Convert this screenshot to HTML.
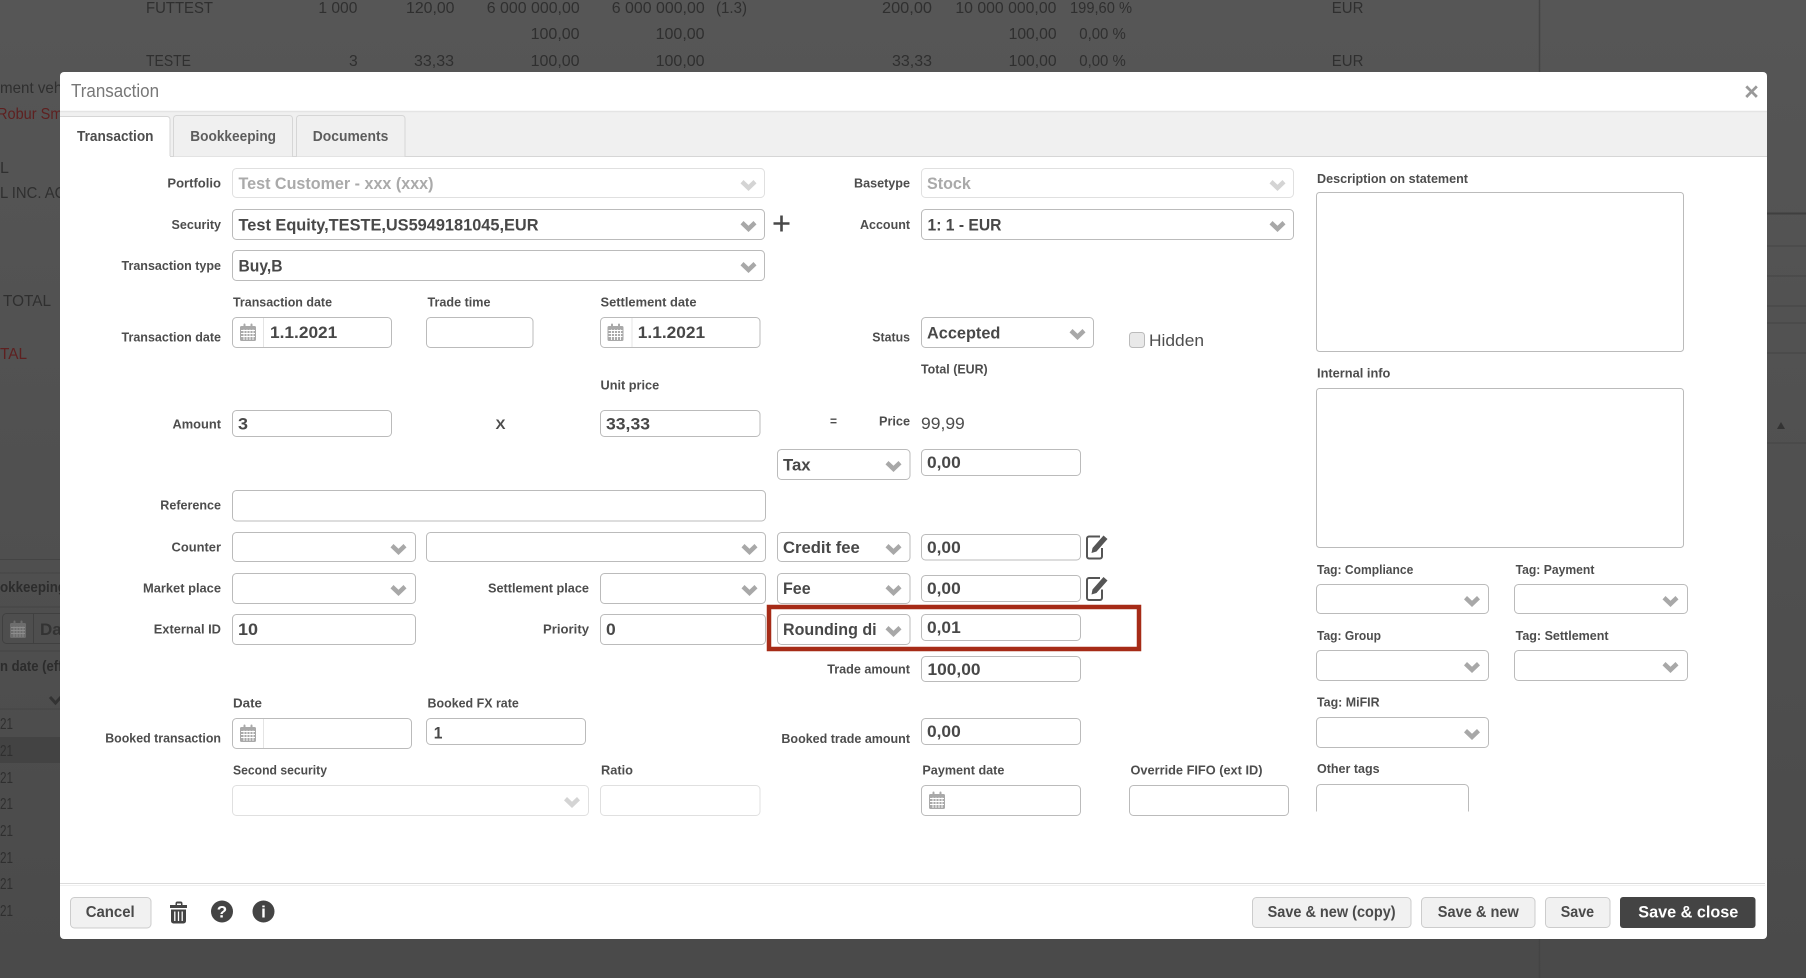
<!DOCTYPE html>
<html><head><meta charset="utf-8"><title>Transaction</title>
<style>
html,body{margin:0;padding:0;background:#4e4e4e;overflow:hidden}
svg{display:block;font-family:"Liberation Sans",sans-serif}
.b{fill:#2f2f2f;font-size:16px}
.r{fill:#5e2020;font-size:16px}
.bb{fill:#2c2c2c;font-size:14.500px;font-weight:bold}
.l{fill:#4d4d4d;font-size:13px;font-weight:bold}
.v{fill:#484848;font-size:17px;font-weight:bold}
.d{fill:#aaa;font-size:17px;font-weight:bold}
.n{fill:#4d4d4d;font-size:17px}
.t{fill:#4d4d4d;font-size:15px;font-weight:bold}
.tt{fill:#777;font-size:18px}
.btn{fill:#4a4a4a;font-size:16px;font-weight:bold}
.i{fill:#fff;stroke:#bbb;stroke-width:1}
.o{fill:#fff;stroke:#e0e0e0;stroke-width:1}
.bt{fill:#f1f1f1;stroke:#ccc;stroke-width:1}
</style></head><body>
<svg width="1806" height="978" viewBox="0 0 1806 978" xmlns="http://www.w3.org/2000/svg">
<defs>
<linearGradient id="bg" x1="0" y1="0" x2="0" y2="1"><stop offset="0" stop-color="#565656"/><stop offset="1" stop-color="#4a4a4a"/></linearGradient>
<symbol id="ch" width="16" height="11" viewBox="0 0 16 11"><path d="M0 3.400 3 0 8 4.800 13 0 16 3.400 8 11Z" fill="#a8a8a8"/></symbol>
<symbol id="chd" width="16" height="11" viewBox="0 0 16 11"><path d="M0 3.400 3 0 8 4.800 13 0 16 3.400 8 11Z" fill="#d4d4d4"/></symbol>
<symbol id="cal" width="16" height="18" viewBox="0 0 16 18"><path d="M1.500 3h2V1.500a1 1 0 0 1 2 0V3h5V1.500a1 1 0 0 1 2 0V3h2A1.500 1.500 0 0 1 16 4.500V16.500A1.500 1.500 0 0 1 14.500 18H1.500A1.500 1.500 0 0 1 0 16.500V4.500A1.500 1.500 0 0 1 1.500 3Z" fill="#a9a9a9"/><path d="M1 7.500H15M1 10.500H15M1 13.500H15M4 6.500V17M7 6.500V17M10 6.500V17M13 6.500V17" stroke="#fff" stroke-width=".9"/></symbol>
<symbol id="ed" width="22" height="26" viewBox="0 0 22 26"><path d="M14 2.500H3A2 2 0 0 0 1 4.500V22.500A2 2 0 0 0 3 24.500H14A2 2 0 0 0 16 22.500V14" fill="none" stroke="#555" stroke-width="2"/><path d="M5.500 19 6.500 14 17.500 1.500 21.500 5 10.500 17.500Z" fill="#555"/></symbol>
<clipPath id="rc"><rect x="780" y="610" width="97" height="40"/></clipPath>
<clipPath id="oc"><rect x="1310" y="780" width="170" height="31.500"/></clipPath>
</defs>

<!-- page behind the overlay -->
<rect width="1806" height="978" fill="url(#bg)"/>
<path d="M1539.500 0V978" stroke="#444" stroke-width="1.500"/>
<path d="M1767 213.500H1806" stroke="#3f3f3f" stroke-width="2"/>
<path d="M1767 246H1806M1767 276H1806M1767 306H1806M1767 323H1806M1767 353H1806M1767 443H1806" stroke="#444"/>
<path d="M1777 429h8l-4-7Z" fill="#333"/>
<path d="M0 559.500H60M0 573H60M0 607H60M0 651H60M0 709H60" stroke="#444"/>
<rect x="0" y="737" width="60" height="26" fill="#434343"/>

<text class="b" x="146" y="13" textLength="67" lengthAdjust="spacingAndGlyphs">FUTTEST</text>
<text class="b" x="318.400" y="13" textLength="39" lengthAdjust="spacingAndGlyphs">1 000</text>
<text class="b" x="406" y="13" textLength="48.500" lengthAdjust="spacingAndGlyphs">120,00</text>
<text class="b" x="486.700" y="13" textLength="93" lengthAdjust="spacingAndGlyphs">6 000 000,00</text>
<text class="b" x="611.700" y="13" textLength="93" lengthAdjust="spacingAndGlyphs">6 000 000,00</text>
<text class="b" x="716" y="13" textLength="31" lengthAdjust="spacingAndGlyphs">(1.3)</text>
<text class="b" x="882" y="13" textLength="50" lengthAdjust="spacingAndGlyphs">200,00</text>
<text class="b" x="955.400" y="13" textLength="101" lengthAdjust="spacingAndGlyphs">10 000 000,00</text>
<text class="b" x="1070" y="13" textLength="62" lengthAdjust="spacingAndGlyphs">199,60 %</text>
<text class="b" x="1331.800" y="13" textLength="31.600" lengthAdjust="spacingAndGlyphs">EUR</text>

<text class="b" x="530.600" y="39" textLength="49" lengthAdjust="spacingAndGlyphs">100,00</text>
<text class="b" x="655.600" y="39" textLength="49" lengthAdjust="spacingAndGlyphs">100,00</text>
<text class="b" x="1008.600" y="39" textLength="48" lengthAdjust="spacingAndGlyphs">100,00</text>
<text class="b" x="1079.300" y="39" textLength="46.500" lengthAdjust="spacingAndGlyphs">0,00 %</text>

<text class="b" x="146" y="66" textLength="45" lengthAdjust="spacingAndGlyphs">TESTE</text>
<text class="b" x="349" y="66" textLength="8.700" lengthAdjust="spacingAndGlyphs">3</text>
<text class="b" x="414" y="66" textLength="40" lengthAdjust="spacingAndGlyphs">33,33</text>
<text class="b" x="530.600" y="66" textLength="49" lengthAdjust="spacingAndGlyphs">100,00</text>
<text class="b" x="655.600" y="66" textLength="49" lengthAdjust="spacingAndGlyphs">100,00</text>
<text class="b" x="892" y="66" textLength="40" lengthAdjust="spacingAndGlyphs">33,33</text>
<text class="b" x="1008.600" y="66" textLength="48" lengthAdjust="spacingAndGlyphs">100,00</text>
<text class="b" x="1079.300" y="66" textLength="46.500" lengthAdjust="spacingAndGlyphs">0,00 %</text>
<text class="b" x="1331.800" y="66" textLength="31.600" lengthAdjust="spacingAndGlyphs">EUR</text>

<text class="b" x="0" y="93" textLength="85" lengthAdjust="spacingAndGlyphs">ment vehicle</text>
<text class="r" x="-3" y="119" textLength="80" lengthAdjust="spacingAndGlyphs">Robur Small</text>
<text class="b" x="0" y="173">L</text>
<text class="b" x="0" y="198" textLength="76" lengthAdjust="spacingAndGlyphs">L INC. ACC</text>
<text class="b" x="3" y="306" textLength="48" lengthAdjust="spacingAndGlyphs">TOTAL</text>
<text class="r" x="0" y="359" textLength="27" lengthAdjust="spacingAndGlyphs">TAL</text>
<text class="bb" x="0" y="592" textLength="66" lengthAdjust="spacingAndGlyphs">okkeeping</text>
<rect x="2.500" y="613.500" width="70" height="30" rx="4" fill="none" stroke="#404040"/>
<path d="M33.500 614V643" stroke="#404040"/>
<use href="#cal" x="10" y="620" opacity=".35"/>
<text x="40" y="635" font-size="17" font-weight="bold" fill="#333">Date</text>
<text class="bb" x="0" y="671" textLength="104" lengthAdjust="spacingAndGlyphs">n date (effective)</text>
<path d="M50 697 55.500 703 61 697" fill="none" stroke="#333" stroke-width="3"/>
<text class="b" x="0" y="729" textLength="13" lengthAdjust="spacingAndGlyphs">21</text>
<text class="b" x="0" y="756" textLength="13" lengthAdjust="spacingAndGlyphs">21</text>
<text class="b" x="0" y="783" textLength="13" lengthAdjust="spacingAndGlyphs">21</text>
<text class="b" x="0" y="809" textLength="13" lengthAdjust="spacingAndGlyphs">21</text>
<text class="b" x="0" y="836" textLength="13" lengthAdjust="spacingAndGlyphs">21</text>
<text class="b" x="0" y="863" textLength="13" lengthAdjust="spacingAndGlyphs">21</text>
<text class="b" x="0" y="889" textLength="13" lengthAdjust="spacingAndGlyphs">21</text>
<text class="b" x="0" y="916" textLength="13" lengthAdjust="spacingAndGlyphs">21</text>

<!-- modal -->
<rect x="60" y="72" width="1707" height="867" rx="4" fill="#fff"/>
<text class="tt" x="71" y="97" textLength="88" lengthAdjust="spacingAndGlyphs">Transaction</text>
<text x="1751.500" y="100" font-size="25" font-weight="bold" fill="#999" text-anchor="middle">×</text>
<rect x="60" y="112" width="1707" height="44" fill="#f0f0f0"/>
<path d="M60 111.500H1767" stroke="#e4e4e4" stroke-width="1.500"/>
<path d="M60 156.500H1767" stroke="#d6d6d6"/>
<path d="M173.500 156.500V118.500a3 3 0 0 1 3-3H289.500a3 3 0 0 1 3 3V156.500" fill="#f0f0f0" stroke="#d6d6d6"/>
<path d="M296.500 156.500V118.500a3 3 0 0 1 3-3H402a3 3 0 0 1 3 3V156.500" fill="#f0f0f0" stroke="#d6d6d6"/>
<path d="M60 157.500V116.500H167a3 3 0 0 1 3 3V157.500Z" fill="#fff"/>
<path d="M60 116.500H167a3 3 0 0 1 3 3V156" fill="none" stroke="#d6d6d6"/>
<text class="t" x="77" y="141" textLength="76.500" lengthAdjust="spacingAndGlyphs">Transaction</text>
<text class="t" x="190.300" y="141" textLength="85.700" lengthAdjust="spacingAndGlyphs" fill-opacity=".9">Bookkeeping</text>
<text class="t" x="312.800" y="141" textLength="75.500" lengthAdjust="spacingAndGlyphs" fill-opacity=".9">Documents</text>

<!-- controls -->
<rect class="o" x="232.500" y="168.500" width="532" height="29" rx="4"/>
<rect class="i" x="232.500" y="209.500" width="532" height="30" rx="4"/>
<rect class="i" x="232.500" y="250.500" width="532" height="30" rx="4"/>
<rect class="i" x="232.500" y="317.500" width="159" height="30" rx="4"/>
<rect class="i" x="426.500" y="317.500" width="106.500" height="30" rx="4"/>
<rect class="i" x="600.500" y="317.500" width="159.500" height="30" rx="4"/>
<rect class="i" x="232.500" y="410.500" width="159" height="26" rx="4"/>
<rect class="i" x="600.500" y="410.500" width="159.500" height="26" rx="4"/>
<rect class="i" x="232.500" y="490.500" width="533" height="30.500" rx="4"/>
<rect class="i" x="232.500" y="532.500" width="183" height="29" rx="4"/>
<rect class="i" x="426.500" y="532.500" width="339" height="29" rx="4"/>
<rect class="i" x="232.500" y="573.500" width="183" height="30" rx="4"/>
<rect class="i" x="600.500" y="573.500" width="165" height="30" rx="4"/>
<rect class="i" x="232.500" y="614.500" width="183" height="30" rx="4"/>
<rect class="i" x="600.500" y="614.500" width="165" height="30" rx="4"/>
<rect class="i" x="232.500" y="718.500" width="179" height="30" rx="4"/>
<rect class="i" x="426.500" y="718.500" width="159" height="26" rx="4"/>
<rect class="o" x="232.500" y="785.500" width="356" height="30" rx="4"/>
<rect class="o" x="600.500" y="785.500" width="159.500" height="30" rx="4"/>
<path d="M263.500 318V347M632 318V347M263.500 719V748M952.500 786V815" stroke="#e4e4e4"/>

<rect class="o" x="921.500" y="168.500" width="372" height="29" rx="4"/>
<rect class="i" x="921.500" y="209.500" width="372" height="30" rx="4"/>
<rect class="i" x="921.500" y="317.500" width="172" height="30" rx="4"/>
<rect x="1129.500" y="332.500" width="15" height="15" rx="3" fill="#e9e9e9" stroke="#bbb"/>
<rect class="i" x="777.500" y="449.500" width="132.500" height="30" rx="4"/>
<rect class="i" x="921.500" y="449.500" width="159" height="26" rx="4"/>
<rect class="i" x="777.500" y="532.500" width="132.500" height="29" rx="4"/>
<rect class="i" x="921.500" y="534.500" width="159" height="25.500" rx="4"/>
<rect class="i" x="777.500" y="573.500" width="132.500" height="30" rx="4"/>
<rect class="i" x="921.500" y="575.500" width="159" height="26" rx="4"/>
<rect class="i" x="777.500" y="614.500" width="132.500" height="30" rx="4"/>
<rect class="i" x="921.500" y="614.500" width="159" height="26" rx="4"/>
<rect class="i" x="921.500" y="656.500" width="159" height="25" rx="4"/>
<rect class="i" x="921.500" y="718.500" width="159" height="26" rx="4"/>
<rect class="i" x="921.500" y="785.500" width="159" height="30" rx="4"/>
<rect class="i" x="1129.500" y="785.500" width="159" height="30" rx="4"/>

<rect class="i" x="1316.500" y="192.500" width="367" height="159" rx="3"/>
<rect class="i" x="1316.500" y="388.500" width="367" height="159" rx="3"/>
<rect class="i" x="1316.500" y="584.500" width="172" height="29" rx="4"/>
<rect class="i" x="1514.500" y="584.500" width="173" height="29" rx="4"/>
<rect class="i" x="1316.500" y="650.500" width="172" height="30" rx="4"/>
<rect class="i" x="1514.500" y="650.500" width="173" height="30" rx="4"/>
<rect class="i" x="1316.500" y="717.500" width="172" height="30" rx="4"/>
<rect class="i" x="1316.500" y="784.500" width="152" height="40" rx="4" clip-path="url(#oc)"/>

<!-- red highlight -->
<rect x="769" y="607" width="370" height="42" fill="none" stroke="#a62b17" stroke-width="4.500"/>

<!-- chevrons -->
<use href="#chd" x="740.500" y="180"/>
<use href="#ch" x="740.500" y="221"/>
<use href="#ch" x="740.500" y="262"/>
<use href="#chd" x="1269.500" y="180"/>
<use href="#ch" x="1269.500" y="221"/>
<use href="#ch" x="1069.500" y="329"/>
<use href="#ch" x="390.500" y="544"/>
<use href="#ch" x="741.500" y="544"/>
<use href="#ch" x="390.500" y="585"/>
<use href="#ch" x="741.500" y="585"/>
<use href="#ch" x="885.500" y="461"/>
<use href="#ch" x="885.500" y="544"/>
<use href="#ch" x="885.500" y="585"/>
<use href="#ch" x="885.500" y="626"/>
<use href="#ch" x="1464" y="596"/>
<use href="#ch" x="1662.500" y="596"/>
<use href="#ch" x="1464" y="662"/>
<use href="#ch" x="1662.500" y="662"/>
<use href="#ch" x="1464" y="729"/>
<use href="#chd" x="564" y="797"/>

<!-- calendars -->
<use href="#cal" x="240" y="323"/>
<use href="#cal" x="607.500" y="323"/>
<use href="#cal" x="240" y="724"/>
<use href="#cal" x="929" y="791"/>

<!-- edit icons -->
<use href="#ed" x="1086" y="534"/>
<use href="#ed" x="1086" y="575.500"/>

<!-- plus -->
<path d="M781.500 215.500V231.500M773.500 223.500H789.500" stroke="#484848" stroke-width="2.600"/>

<!-- left labels -->
<text class="l" x="167.400" y="187.500" textLength="53.600" lengthAdjust="spacingAndGlyphs">Portfolio</text>
<text class="l" x="171.500" y="229" textLength="49.500" lengthAdjust="spacingAndGlyphs">Security</text>
<text class="l" x="121.500" y="270" textLength="99.500" lengthAdjust="spacingAndGlyphs">Transaction type</text>
<text class="l" x="121.500" y="341.500" textLength="99.500" lengthAdjust="spacingAndGlyphs">Transaction date</text>
<text class="l" x="172.500" y="428.500" textLength="48.500" lengthAdjust="spacingAndGlyphs">Amount</text>
<text class="l" x="160.300" y="509.500" textLength="60.700" lengthAdjust="spacingAndGlyphs">Reference</text>
<text class="l" x="171.500" y="551.500" textLength="49.500" lengthAdjust="spacingAndGlyphs">Counter</text>
<text class="l" x="143" y="592.500" textLength="78" lengthAdjust="spacingAndGlyphs">Market place</text>
<text class="l" x="488" y="592.500" textLength="101" lengthAdjust="spacingAndGlyphs">Settlement place</text>
<text class="l" x="153.700" y="633.500" textLength="67.300" lengthAdjust="spacingAndGlyphs">External ID</text>
<text class="l" x="543" y="633.500" textLength="46" lengthAdjust="spacingAndGlyphs">Priority</text>
<text class="l" x="105.200" y="742.500" textLength="115.800" lengthAdjust="spacingAndGlyphs">Booked transaction</text>

<text class="l" x="233" y="306.500" textLength="99" lengthAdjust="spacingAndGlyphs">Transaction date</text>
<text class="l" x="427.500" y="306.500" textLength="63" lengthAdjust="spacingAndGlyphs">Trade time</text>
<text class="l" x="600.500" y="306.500" textLength="96" lengthAdjust="spacingAndGlyphs">Settlement date</text>
<text class="l" x="600.500" y="389.500" textLength="58.700" lengthAdjust="spacingAndGlyphs">Unit price</text>
<text class="l" x="233" y="707.500" textLength="29" lengthAdjust="spacingAndGlyphs">Date</text>
<text class="l" x="427.500" y="707.500" textLength="91.300" lengthAdjust="spacingAndGlyphs">Booked FX rate</text>
<text class="l" x="233" y="774.500" textLength="94" lengthAdjust="spacingAndGlyphs">Second security</text>
<text class="l" x="601" y="774.500" textLength="32" lengthAdjust="spacingAndGlyphs">Ratio</text>
<text x="495.500" y="429" font-size="14" font-weight="bold" fill="#4d4d4d" textLength="10" lengthAdjust="spacingAndGlyphs">X</text>

<!-- middle labels -->
<text class="l" x="854" y="187.500" textLength="56" lengthAdjust="spacingAndGlyphs">Basetype</text>
<text class="l" x="860" y="229" textLength="50" lengthAdjust="spacingAndGlyphs">Account</text>
<text class="l" x="872.300" y="341.500" textLength="37.700" lengthAdjust="spacingAndGlyphs">Status</text>
<text class="l" x="921" y="373.500" textLength="66.700" lengthAdjust="spacingAndGlyphs">Total (EUR)</text>
<text class="l" x="879" y="425.500" textLength="31" lengthAdjust="spacingAndGlyphs">Price</text>
<text class="l" x="830" y="425.500" textLength="7" lengthAdjust="spacingAndGlyphs">=</text>
<text class="l" x="827.200" y="673.500" textLength="82.800" lengthAdjust="spacingAndGlyphs">Trade amount</text>
<text class="l" x="781.400" y="743" textLength="128.600" lengthAdjust="spacingAndGlyphs">Booked trade amount</text>
<text class="l" x="922.400" y="774.500" textLength="82" lengthAdjust="spacingAndGlyphs">Payment date</text>
<text class="l" x="1130.500" y="774.500" textLength="132" lengthAdjust="spacingAndGlyphs">Override FIFO (ext ID)</text>

<!-- right labels -->
<text class="l" x="1317" y="183" textLength="151" lengthAdjust="spacingAndGlyphs">Description on statement</text>
<text class="l" x="1317" y="377.500" textLength="73.400" lengthAdjust="spacingAndGlyphs">Internal info</text>
<text class="l" x="1317" y="574" textLength="96.300" lengthAdjust="spacingAndGlyphs">Tag: Compliance</text>
<text class="l" x="1515.600" y="574" textLength="78.800" lengthAdjust="spacingAndGlyphs">Tag: Payment</text>
<text class="l" x="1317" y="640" textLength="64" lengthAdjust="spacingAndGlyphs">Tag: Group</text>
<text class="l" x="1515.600" y="640" textLength="93" lengthAdjust="spacingAndGlyphs">Tag: Settlement</text>
<text class="l" x="1317" y="706.500" textLength="62.600" lengthAdjust="spacingAndGlyphs">Tag: MiFIR</text>
<text class="l" x="1317" y="773" textLength="62.600" lengthAdjust="spacingAndGlyphs">Other tags</text>

<!-- values -->
<text class="d" x="238.500" y="189" textLength="195" lengthAdjust="spacingAndGlyphs">Test Customer - xxx (xxx)</text>
<text class="v" x="238.500" y="230.500" textLength="300" lengthAdjust="spacingAndGlyphs">Test Equity,TESTE,US5949181045,EUR</text>
<text class="v" x="238.500" y="271.500" textLength="44" lengthAdjust="spacingAndGlyphs">Buy,B</text>
<text class="v" x="270" y="338" textLength="67.300" lengthAdjust="spacingAndGlyphs">1.1.2021</text>
<text class="v" x="637.800" y="338" textLength="67.300" lengthAdjust="spacingAndGlyphs">1.1.2021</text>
<text class="v" x="238" y="429.500" textLength="10" lengthAdjust="spacingAndGlyphs">3</text>
<text class="v" x="606" y="429.500" textLength="44" lengthAdjust="spacingAndGlyphs">33,33</text>
<text class="v" x="238" y="635" textLength="20" lengthAdjust="spacingAndGlyphs">10</text>
<text class="v" x="606" y="635" textLength="9.700" lengthAdjust="spacingAndGlyphs">0</text>
<text class="v" x="433.700" y="738.500" textLength="8.700" lengthAdjust="spacingAndGlyphs">1</text>

<text class="d" x="927" y="189" textLength="43.800" lengthAdjust="spacingAndGlyphs">Stock</text>
<text class="v" x="927.500" y="230.500" textLength="74" lengthAdjust="spacingAndGlyphs">1: 1 - EUR</text>
<text class="v" x="927" y="338.500" textLength="73.400" lengthAdjust="spacingAndGlyphs">Accepted</text>
<text class="n" x="1149" y="346" textLength="55" lengthAdjust="spacingAndGlyphs">Hidden</text>
<text class="n" x="921" y="429" textLength="43.800" lengthAdjust="spacingAndGlyphs">99,99</text>
<text class="v" x="783" y="470.500" textLength="27.600" lengthAdjust="spacingAndGlyphs">Tax</text>
<text class="v" x="927" y="468" textLength="33.700" lengthAdjust="spacingAndGlyphs">0,00</text>
<text class="v" x="783" y="553" textLength="76.800" lengthAdjust="spacingAndGlyphs">Credit fee</text>
<text class="v" x="927" y="553" textLength="33.700" lengthAdjust="spacingAndGlyphs">0,00</text>
<text class="v" x="783" y="594" textLength="27.600" lengthAdjust="spacingAndGlyphs">Fee</text>
<text class="v" x="927" y="594" textLength="33.700" lengthAdjust="spacingAndGlyphs">0,00</text>
<text class="v" x="783" y="635" textLength="93.600" lengthAdjust="spacingAndGlyphs" clip-path="url(#rc)">Rounding di</text>
<text class="v" x="927" y="633" textLength="33.700" lengthAdjust="spacingAndGlyphs">0,01</text>
<text class="v" x="927.500" y="675" textLength="53" lengthAdjust="spacingAndGlyphs">100,00</text>
<text class="v" x="927" y="737" textLength="33.700" lengthAdjust="spacingAndGlyphs">0,00</text>

<!-- footer -->
<path d="M60 883.500H1765" stroke="#dcdcdc"/>
<path d="M60 885.500H1765" stroke="#f0f0f0"/>
<rect class="bt" x="70.500" y="897.500" width="80.500" height="30.500" rx="4"/>
<text class="btn" x="85.700" y="917" textLength="49" lengthAdjust="spacingAndGlyphs">Cancel</text>
<g fill="#444">
<path d="M175.500 903.500a2 2 0 0 1 2-2h3a2 2 0 0 1 2 2v1.500H187V908H170V905h5.500Zm1.500 0v1.500h4v-1.500Z"/>
<path d="M171 909.500H186V921a2.500 2.500 0 0 1-2.500 2.500h-10A2.500 2.500 0 0 1 171 921Z"/>
</g>
<path d="M174.800 911.500V921M178.500 911.500V921M182.200 911.500V921" stroke="#fff" stroke-width="1.300"/>
<circle cx="222" cy="911.500" r="11" fill="#444"/>
<text x="222" y="917.500" font-size="17" font-weight="bold" fill="#fff" text-anchor="middle">?</text>
<circle cx="263.500" cy="911.500" r="11" fill="#444"/>
<text x="263.500" y="917.500" font-size="17" font-weight="bold" fill="#fff" text-anchor="middle">i</text>

<rect class="bt" x="1252.500" y="897.500" width="158.500" height="30" rx="4"/>
<text class="btn" x="1267.600" y="917" textLength="128" lengthAdjust="spacingAndGlyphs">Save &amp; new (copy)</text>
<rect class="bt" x="1421.500" y="897.500" width="113.500" height="30" rx="4"/>
<text class="btn" x="1437.800" y="917" textLength="81" lengthAdjust="spacingAndGlyphs">Save &amp; new</text>
<rect class="bt" x="1545.500" y="897.500" width="64.500" height="30" rx="4"/>
<text class="btn" x="1560.800" y="917" textLength="33.300" lengthAdjust="spacingAndGlyphs">Save</text>
<rect x="1620" y="897" width="135.500" height="31" rx="3" fill="#444"/>
<text class="btn" x="1638.300" y="917.500" textLength="100" lengthAdjust="spacingAndGlyphs" style="fill:#fff;font-size:17px">Save &amp; close</text>
</svg>
</body></html>
